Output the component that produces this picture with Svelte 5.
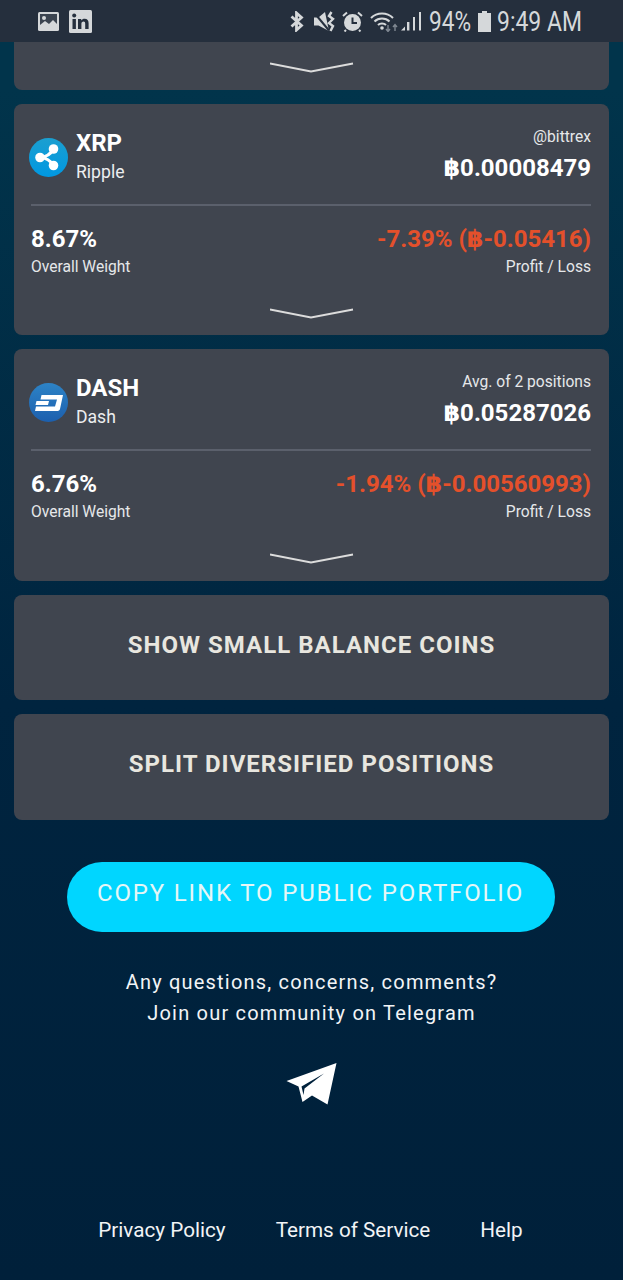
<script>
  let coins = [
    { symbol: "XRP", name: "Ripple", note: "@bittrex", price: "฿0.00008479", weight: "8.67%", profit: "-7.39% (฿-0.05416)" },
    { symbol: "DASH", name: "Dash", note: "Avg. of 2 positions", price: "฿0.05287026", weight: "6.76%", profit: "-1.94% (฿-0.00560993)" },
  ];

  let actions = ["SHOW SMALL BALANCE COINS", "SPLIT DIVERSIFIED POSITIONS"];
  let links = ["Privacy Policy", "Terms of Service", "Help"];
</script>

{#snippet chevron()}
  <svg class="chevron" width="84" height="11" viewBox="0 0 84 11">
    <polyline points="0,1.5 41,9.5 83,1.5" fill="none" stroke="#dcdcdc" stroke-width="1.8" />
  </svg>
{/snippet}

<div class="page">
  <!-- Android status bar -->
  <div class="status">
    <div class="status-left">
      <svg width="21" height="19" viewBox="0 0 21 19">
        <rect width="21" height="19" rx="1.5" fill="#d5d8da" />
        <rect x="2" y="2" width="17" height="15" fill="#3b4450" />
        <path d="M2 17 L2 13 L7 9 L11 12 L15 8 L19 12 L19 17 Z" fill="#d5d8da" />
        <circle cx="6" cy="6" r="2" fill="#d5d8da" />
      </svg>
      <svg width="23" height="23" viewBox="0 0 23 23">
        <rect width="23" height="23" rx="1.5" fill="#d5d8da" />
        <rect x="3.5" y="9" width="3.4" height="10" fill="#252f3d" />
        <circle cx="5.2" cy="5.6" r="2" fill="#252f3d" />
        <path d="M9 9 H12.2 V10.4 C13 9.3 14.2 8.7 15.6 8.7 C18.4 8.7 19.6 10.4 19.6 13.2 V19 H16.2 V13.8 C16.2 12.4 15.7 11.6 14.5 11.6 C13.2 11.6 12.4 12.5 12.4 13.9 V19 H9 Z" fill="#252f3d" />
      </svg>
    </div>
    <div class="status-right">
      <svg class="s-bt" width="14" height="21" viewBox="0 0 14 21">
        <path d="M1.5 5.5 L11.5 14.5 L6.5 19 V2 L11.5 6.5 L1.5 15.5" fill="none" stroke="#d5d8da" stroke-width="2.8" />
      </svg>
      <svg class="s-mute" width="23" height="21" viewBox="0 0 23 21">
        <path d="M1 6.5 H5.5 L12 1 L16 20 L5.5 14.5 H1 Z" fill="#d5d8da" />
        <path d="M1 1.5 L16 19.5" stroke="#252f3d" stroke-width="2" />
        <path d="M18.5 1 L16 5 L20 8 L16 12 L20 15 L17.5 20" fill="none" stroke="#d5d8da" stroke-width="2.4" />
      </svg>
      <svg class="s-alarm" width="21" height="21" viewBox="0 0 21 21">
        <circle cx="10.5" cy="11.5" r="8.5" fill="#d5d8da" />
        <path d="M10.5 6.5 V12 H15" fill="none" stroke="#252f3d" stroke-width="2" />
        <path d="M1 5 L5 1.5 M20 5 L16 1.5 M4 19 L2.5 20.5 M17 19 L18.5 20.5" stroke="#d5d8da" stroke-width="2" />
      </svg>
      <svg class="s-wifi" width="30" height="21" viewBox="0 0 30 21">
        <path d="M1 7 C7 1 17 1 23 7 M4.5 10.5 C8.5 6.5 15.5 6.5 19.5 10.5 M8 14 C10 12 14 12 16 14" fill="none" stroke="#d5d8da" stroke-width="2" />
        <circle cx="12" cy="17" r="1.8" fill="#d5d8da" />
        <path d="M18 14 V20 M16 18 L18 20.5 L20 18 M25 20 V14 M23 16 L25 13.5 L27 16" fill="none" stroke="#7f8791" stroke-width="1.4" />
      </svg>
      <svg class="s-signal" width="21" height="21" viewBox="0 0 21 21">
        <path d="M0 19.5 L4 15.5 V19.5 Z" fill="#d5d8da" />
        <rect x="6" y="11" width="2.4" height="8.5" fill="#d5d8da" />
        <rect x="12" y="6" width="2" height="13.5" fill="#d5d8da" />
        <rect x="18" y="1" width="2" height="18.5" fill="#d5d8da" />
      </svg>
      <span class="s-text s-pct">94%</span>
      <svg class="s-batt" width="13" height="21" viewBox="0 0 13 21">
        <path d="M4 0 H9 V2 H13 V21 H0 V2 H4 Z" fill="#d5d8da" />
      </svg>
      <span class="s-text s-time">9:49 AM</span>
    </div>
  </div>

  <div class="content">
    <div class="card stub">{@render chevron()}</div>

    {#each coins as coin}
      <div class="card coin">
        <div class="coin-head">
          <div class="coin-id">
            {#if coin.symbol === "XRP"}
              <svg class="logo" width="39" height="39" viewBox="0 0 39 39">
                <defs>
                  <linearGradient id="xrp-bg" x1="0" y1="0" x2="0" y2="1">
                    <stop offset="0" stop-color="#1b9fd0" />
                    <stop offset="1" stop-color="#0098e2" />
                  </linearGradient>
                </defs>
                <circle cx="19.5" cy="19.5" r="19.5" fill="url(#xrp-bg)" />
                <path d="M11 19.5 Q20 19 24.5 11 M11 19.5 Q20 20 24.5 27.5" fill="none" stroke="#fff" stroke-width="3.2" />
                <circle cx="11" cy="19.5" r="4.8" fill="#fff" />
                <circle cx="24.5" cy="11" r="4.8" fill="#fff" />
                <circle cx="24.5" cy="27.5" r="4.8" fill="#fff" />
              </svg>
            {:else}
              <svg class="logo" width="39" height="39" viewBox="0 0 39 39">
                <defs>
                  <linearGradient id="dash-bg" x1="0" y1="0" x2="0" y2="1">
                    <stop offset="0" stop-color="#2d83c6" />
                    <stop offset="1" stop-color="#1c5fae" />
                  </linearGradient>
                </defs>
                <circle cx="19.5" cy="19.5" r="19.5" fill="url(#dash-bg)" />
                <path d="M12.5 12 H34 L31 26 C30.6 27.6 29.5 28 28 28 H6 L7 23.5 H26 L28 16.5 H11.5 Z" fill="#fff" />
                <path d="M7.5 18 H20 L19 22 H6.5 Z" fill="#fff" />
              </svg>
            {/if}
            <div class="coin-names">
              <span class="symbol">{coin.symbol}</span>
              <span class="name">{coin.name}</span>
            </div>
          </div>
          <div class="coin-price">
            <span class="note">{coin.note}</span>
            <span class="price">{coin.price}</span>
          </div>
        </div>
        <div class="coin-stats">
          <div class="stat">
            <span class="big">{coin.weight}</span>
            <span class="label">Overall Weight</span>
          </div>
          <div class="stat right">
            <span class="big loss">{coin.profit}</span>
            <span class="label">Profit / Loss</span>
          </div>
        </div>
        {@render chevron()}
      </div>
    {/each}

    {#each actions as action}
      <div class="card action">{action}</div>
    {/each}

    <div class="copy">COPY LINK TO PUBLIC PORTFOLIO</div>

    <p class="community">Any questions, concerns, comments?<br />Join our community on Telegram</p>

    <svg class="telegram" width="51" height="43" viewBox="0 0 51 43">
      <path fill-rule="evenodd" d="M50.5 1 L41.5 42.5 L26 33.5 L16.5 40 L12.5 24.5 L0.5 19 Z M38 11.5 L15.5 24.5 L17.5 33 L18.5 26.5 Z" fill="#fff" />
    </svg>

    <div class="footer">
      {#each links as link}
        <span>{link}</span>
      {/each}
    </div>
  </div>
</div>

<style>
  :global(body) {
    margin: 0;
    background: #00233c;
  }

  .page {
    width: 623px;
    height: 1280px;
    overflow: hidden;
    background: linear-gradient(180deg, #01344b 0%, #01344b 7%, #00243f 55%, #00203a 100%);
    font-family: Roboto, "DejaVu Sans", sans-serif;
    color: #fff;
  }

  .status {
    height: 42px;
    background: #252f3d;
    display: flex;
    justify-content: space-between;
    align-items: center;
    padding: 0 41px 0 38px;
    box-sizing: border-box;
  }

  .status-left,
  .status-right {
    display: flex;
    align-items: center;
  }

  .status-left {
    gap: 10px;
  }

  .s-bt { margin-right: 9px; }
  .s-mute { margin-right: 6px; }
  .s-alarm { margin-right: 7px; }
  .s-wifi { margin-right: 1px; }
  .s-signal { margin-right: 7px; }
  .s-batt { margin: 0 6px 0 8px; }

  .s-text {
    font-size: 27px;
    line-height: 42px;
    padding-top: 1px;
    color: #d5d8da;
    display: inline-block;
    transform-origin: left center;
  }

  .s-pct {
    width: 41px;
    transform: scaleX(0.84);
  }

  .s-time {
    width: 85px;
    white-space: nowrap;
    transform: scaleX(0.85);
  }

  .content {
    padding: 0 14px;
    display: flex;
    flex-direction: column;
    gap: 14px;
  }

  .card {
    background: #40454f;
    border-radius: 8px;
  }

  .stub {
    height: 48px;
    border-radius: 0 0 8px 8px;
    display: flex;
    flex-direction: column;
    align-items: center;
    padding-top: 20px;
    box-sizing: border-box;
  }

  .chevron {
    display: block;
    flex: none;
  }

  .coin {
    height: 231.4px;
    padding: 0 18px 0 17px;
    box-sizing: border-box;
    display: flex;
    flex-direction: column;
  }

  .coin .chevron {
    align-self: center;
    margin: 31px 0 0 1px;
  }

  .coin-head {
    height: 100px;
    display: flex;
    justify-content: space-between;
    border-bottom: 2px solid #5b606c;
    box-sizing: content-box;
  }

  .coin-id {
    display: flex;
    align-items: center;
    gap: 8px;
    margin-left: -2px;
    padding-top: 3px;
  }

  .coin-names,
  .coin-price,
  .stat {
    display: flex;
    flex-direction: column;
  }

  .logo {
    margin-top: 3px;
  }

  .symbol {
    font-size: 24px;
    font-weight: 700;
    line-height: 28px;
  }

  .name {
    font-size: 17.6px;
    line-height: 22px;
    margin-top: 4px;
    color: #eceef0;
  }

  .coin-price {
    align-items: flex-end;
    padding-top: 23px;
  }

  .note {
    font-size: 15.6px;
    line-height: 20px;
    color: #e6e8ea;
  }

  .price {
    font-size: 24px;
    font-weight: 700;
    line-height: 28px;
    margin-top: 7px;
  }

  .coin-stats {
    display: flex;
    justify-content: space-between;
    padding-top: 19px;
  }

  .stat.right {
    align-items: flex-end;
  }

  .big {
    font-size: 24px;
    font-weight: 700;
    line-height: 28px;
  }

  .loss {
    color: #e4502b;
  }

  .label {
    font-size: 15.6px;
    line-height: 20px;
    margin-top: 4px;
    color: #e6e8ea;
  }

  .action {
    height: 105.4px;
    display: flex;
    align-items: center;
    justify-content: center;
    font-size: 24px;
    font-weight: 700;
    letter-spacing: 1.02px;
    color: #e8e6df;
    padding-bottom: 5px;
    box-sizing: border-box;
  }

  .copy {
    align-self: center;
    width: 488px;
    height: 70.5px;
    margin: 28px 2px 0 0;
    padding-bottom: 8px;
    box-sizing: border-box;
    border-radius: 36px;
    background: #00d6ff;
    color: #e6f6f6;
    font-size: 24px;
    letter-spacing: 1.85px;
    display: flex;
    align-items: center;
    justify-content: center;
    white-space: nowrap;
  }

  .community {
    margin: 21px 0 0;
    text-align: center;
    font-size: 20px;
    line-height: 31px;
    letter-spacing: 1.2px;
    color: #f2f4f6;
  }

  .telegram {
    align-self: center;
    display: block;
    margin: 19px 0 0;
  }

  .footer {
    display: flex;
    justify-content: center;
    gap: 50px;
    margin-top: 97px;
    padding-right: 2px;
    font-size: 20.7px;
    line-height: 28px;
    color: #f2f4f6;
  }
</style>
